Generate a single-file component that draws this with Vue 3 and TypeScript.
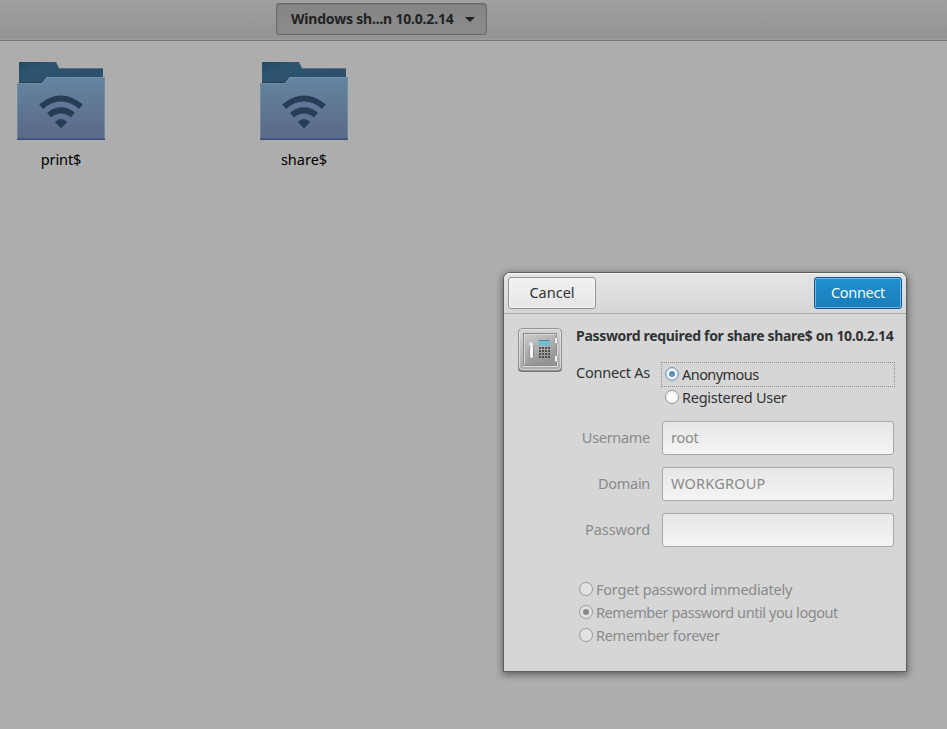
<script setup lang="ts">
import { ref } from 'vue'

interface Share { name: string; cls: string }
interface Field { label: string; value: string; cls: string }
interface Option { label: string; cls: string }

const shares: Share[] = [
  { name: 'print$', cls: 't-print' },
  { name: 'share$', cls: 't-share' },
]
const fields: Field[] = [
  { label: 'Username', value: 'root', cls: 't-user' },
  { label: 'Domain', value: 'WORKGROUP', cls: 't-domain' },
  { label: 'Password', value: '', cls: 't-pass' },
]
const identities: Option[] = [
  { label: 'Anonymous', cls: 't-anon' },
  { label: 'Registered User', cls: 't-reg' },
]
const retention: Option[] = [
  { label: 'Forget password immediately', cls: 't-forget' },
  { label: 'Remember password until you logout', cls: 't-logout' },
  { label: 'Remember forever', cls: 't-forever' },
]
const identity = ref(0)
const keep = ref(1)
</script>

<template>
  <main class="window">
    <header class="toolbar">
      <button class="path-button" type="button">
        <span class="tx t-path">Windows sh...n 10.0.2.14</span>
        <svg width="10" height="5" viewBox="0 0 10 5"><path d="M0 0H10L5 5Z" fill="#222" /></svg>
      </button>
    </header>
    <section class="files">
      <figure v-for="s in shares" :key="s.name" class="file">
        <svg width="88" height="78" viewBox="0 0 88 78">
          <defs>
            <linearGradient id="front" x1="0" y1="0" x2="0" y2="1">
              <stop offset="0" stop-color="#6485a1" />
              <stop offset="1" stop-color="#5a6888" />
            </linearGradient>
            <linearGradient id="back" x1="0" y1="0" x2="1" y2="1">
              <stop offset="0" stop-color="#27485d" />
              <stop offset=".2" stop-color="#2c536f" />
              <stop offset="1" stop-color="#2d4d68" />
            </linearGradient>
          </defs>
          <path d="M2 0H39L42 6H86V30H2Z" fill="url(#back)" />
          <path d="M39 .5L42 6.5H86" fill="none" stroke="#547389" />
          <path d="M2 20.5H25L29 15" fill="none" stroke="#243d50" />
          <path d="M0 21H25L29.500 15H88V78H0Z" fill="url(#front)" />
          <path d="M0 21.500H25L29.500 15.500H87.500V77M.5 21V77" fill="none" stroke="#7893a9" stroke-opacity=".7" />
          <path d="M0 77.200H88" stroke="#374f78" stroke-width="1.600" />
          <g fill="none" stroke="#263e55" stroke-width="6">
            <path d="M24.100 44.600Q44 28.400 63.900 44.600" />
            <path d="M32 53Q44 43.700 56 53" />
          </g>
          <path d="M37.800 60Q44 54.200 50.200 60L44 66.200Z" fill="#263e55" />
        </svg>
        <figcaption><span class="tx" :class="s.cls">{{ s.name }}</span></figcaption>
      </figure>
    </section>

    <form class="dialog" @submit.prevent>
      <div class="titlebar">
        <button class="btn" type="button"><span class="tx t-cancel">Cancel</span></button>
        <button class="btn primary" type="submit"><span class="tx t-connect">Connect</span></button>
      </div>
      <div class="body">
        <svg class="safe" width="46" height="46" viewBox="0 0 46 46">
          <defs>
            <linearGradient id="rim" x1="0" y1="0" x2="0" y2="1">
              <stop offset="0" stop-color="#d6d6d6" />
              <stop offset="1" stop-color="#a9a9a9" />
            </linearGradient>
            <linearGradient id="door" x1="0" y1="0" x2=".4" y2="1">
              <stop offset="0" stop-color="#cdcdcd" />
              <stop offset="1" stop-color="#939393" />
            </linearGradient>
          </defs>
          <rect x="1" y="2" width="44" height="43" rx="4" fill="#777" />
          <rect x="1.500" y="1.500" width="43" height="42" rx="4" fill="url(#rim)" stroke="#929292" />
          <rect x="2.500" y="2.500" width="41" height="40" rx="3" fill="none" stroke="#ececec" stroke-opacity=".6" />
          <rect x="6.500" y="6.500" width="33" height="32" fill="url(#door)" stroke="#8a8a8a" />
          <path d="M7.500 38V7.500H38.500" fill="none" stroke="#d6d6d6" />
          <path d="M6 39.500H40.500V6" fill="none" stroke="#ddd" />
          <rect x="12.500" y="15.500" width="4" height="16" rx="1.800" fill="#f4f4f4" stroke="#808080" stroke-width=".8" />
          <circle cx="14" cy="17" r="2.900" fill="#dedede" stroke="#a0a0a0" stroke-width=".7" />
          <path d="M14.500 17V29.500" stroke="#fff" stroke-width="1.500" />
          <rect x="22" y="13" width="11" height="5.500" fill="#72bfd1" />
          <path d="M22 13.500H33" stroke="#51899a" />
          <g stroke="#4e4e4e" stroke-width="2" stroke-dasharray="2 1">
            <path d="M22 21H33M22 24H33M22 27H33M22 30H33" />
          </g>
          <g fill="#f2f2f2" stroke="#8c8c8c" stroke-width=".7">
            <rect x="37.500" y="10.500" width="3" height="6.200" rx=".8" />
            <rect x="37.500" y="28.500" width="3" height="6.200" rx=".8" />
          </g>
        </svg>
        <div class="content">
          <h1><span class="tx t-title">Password required for share share$ on 10.0.2.14</span></h1>
          <div class="connect-row">
            <span class="label as"><span class="tx t-as">Connect As</span></span>
            <div class="options">
              <label v-for="(o, i) in identities" :key="o.label" class="option" :class="{ focused: identity === i }" @click="identity = i">
                <i class="radio" :class="{ on: identity === i }"></i><span class="tx" :class="o.cls">{{ o.label }}</span>
              </label>
            </div>
          </div>
          <div class="fields">
            <div v-for="f in fields" :key="f.label" class="field">
              <span class="label"><span class="tx" :class="f.cls">{{ f.label }}</span></span>
              <div class="entry"><span class="tx" :class="f.cls + '-value'">{{ f.value }}</span></div>
            </div>
          </div>
          <div class="retention">
            <div v-for="(o, i) in retention" :key="o.label" class="keep">
              <i class="radio off" :class="{ on: keep === i }"></i><span class="tx" :class="o.cls">{{ o.label }}</span>
            </div>
          </div>
        </div>
      </div>
    </form>
  </main>
</template>

<style>
body { background: #adadad; }
</style>

<style scoped>
* { box-sizing: border-box; }
.window { height: 729px; overflow: hidden; position: relative; background: #adadad; color: #303335; font: 14.5px/20px "Noto Sans", "Open Sans", sans-serif; }
.tx { white-space: pre; display: inline-block; line-height: 18px; padding-bottom: 2px; vertical-align: top; }
button { font: inherit; padding: 0; }
.toolbar { height: 41px; border-bottom: 1px solid #777; background: linear-gradient(#a0a0a0, #939393 38px, #9e9e9e); padding: 3px 0 0 276px; }
.path-button { width: 211px; height: 32px; border: 1px solid #686868; border-radius: 3px; background: linear-gradient(#858585, #8b8b8b); box-shadow: inset 0 1px 1px #777; display: flex; align-items: center; padding: 0 11px 0 14px; justify-content: space-between; font-weight: 700; font-size: 14px; color: #222; }
.path-button .tx { padding-bottom: 0; }
.files { display: flex; gap: 155px; padding: 21px 17px 0; }
.file { margin: 0; width: 88px; }
.file svg { display: block; }
figcaption { text-align: center; color: #000; padding-top: 10px; }
.dialog { position: absolute; left: 503px; top: 272px; width: 404px; height: 400px; border: 1px solid #5e5e5e; border-radius: 7px 7px 0 0; background: #d6d6d6; box-shadow: 0 2px 7px 1px rgba(0,0,0,.42); overflow: hidden; }
.titlebar { height: 41px; padding: 4px; display: flex; justify-content: space-between; border-bottom: 1px solid #a8a8a8; background: linear-gradient(#e5e5e5, #d6d6d6); box-shadow: inset 0 1px #f4f4f4; }
.btn { width: 88px; height: 32px; border: 1px solid #919191; border-radius: 3px; background: linear-gradient(#f1f1f1, #e6e6e6); box-shadow: inset 0 0 0 1px #f4f4f4; color: #303335; }
.primary { border-color: #12529a; background: linear-gradient(#1e90d0, #1a7db9); box-shadow: inset 0 0 0 1px #74b8e4; color: #f4faff; }
.body { display: flex; padding: 13px 11px 0 13px; }
.safe { flex: none; }
.content { flex: 1; min-width: 0; padding-left: 13px; }
h1 { margin: 0; font-size: 14px; line-height: 20px; height: 20px; }
h1 .tx { line-height: 17px; padding-bottom: 3px; }
.connect-row, .field { display: flex; }
.label { width: 74px; flex: none; display: flex; justify-content: flex-end; }
.label.as { padding-top: 1px; }
.connect-row { padding-top: 15px; gap: 11px; }
.options { width: 234px; flex: none; }
.option { display: flex; align-items: center; height: 25px; padding-left: 3px; gap: 3px; border: 1px solid transparent; margin-bottom: -2px; }
.option.focused { border: 1px dotted #8c8c8c; }
.radio { width: 14px; height: 14px; flex: none; border: 1px solid #929292; border-radius: 50%; background: #fcfcfc; display: grid; place-items: center; margin-bottom: 1px; }
.radio.on { border-color: #6f9dca; box-shadow: inset 0 0 0 1px #bcd2e8; }
.radio.on::after { content: ""; width: 6px; height: 6px; border-radius: 50%; background: #5b91c2; }
.radio.off { border-color: #999; background: #e2e2e2; box-shadow: none; }
.radio.off.on::after { background: #898989; }
.fields { display: grid; gap: 12px; padding-top: 13px; color: #898b8b; }
.field { gap: 12px; align-items: center; }
.entry { width: 232px; height: 34px; flex: none; border: 1px solid #a8a8a8; border-radius: 3px; background: linear-gradient(#e6e6e6, #f5f5f5); padding: 6px 8px; }
.retention { padding: 31px 0 0 3px; color: #898b8b; }
.keep { display: flex; align-items: center; height: 23px; gap: 3px; }
.t-path { letter-spacing: -.2px; }
.t-print { letter-spacing: -.1px; }
.t-connect { letter-spacing: -.3px; }
.t-title { letter-spacing: -.31px; }
.t-as { letter-spacing: -.22px; }
.t-anon { letter-spacing: -.55px; }
.t-reg { letter-spacing: -.26px; }
.t-user { letter-spacing: -.3px; }
.t-user-value { letter-spacing: -.25px; }
.t-domain { letter-spacing: -.3px; }
.t-domain-value { letter-spacing: .2px; }
.t-pass { letter-spacing: -.08px; }
.t-forget { letter-spacing: -.22px; }
.t-logout { letter-spacing: -.43px; }
.t-forever { letter-spacing: -.29px; }
</style>
